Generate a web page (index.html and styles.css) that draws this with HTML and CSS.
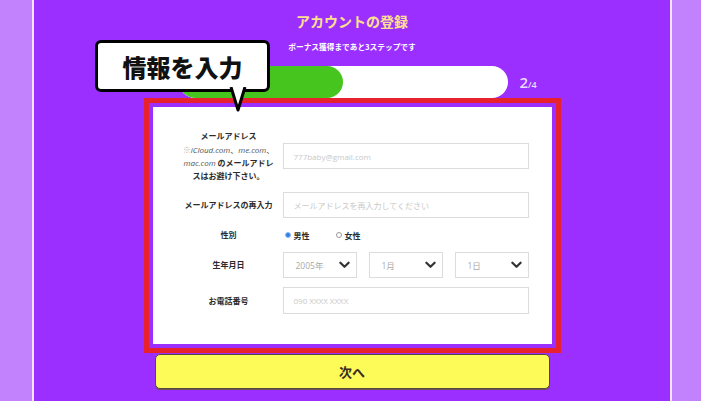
FILE: index.html
```html
<!DOCTYPE html>
<html lang="ja">
<head>
<meta charset="utf-8">
<title>アカウントの登録</title>
<link rel="stylesheet" href="styles.css">
</head>
<body>
<main class="page">
  <h1 class="title">アカウントの登録</h1>
  <p class="sub">ボーナス獲得まであと3ステップです</p>
  <div class="progress-row">
    <div class="bar"><div class="fill" style="width:50%"></div></div>
    <span class="count"><b>2</b><small>/4</small></span>
  </div>
  <form class="card">
    <div class="row row-tall">
      <div class="label">メールアドレス<br><span class="note"><span class="mark">※</span><i>iCloud.com</i>、<i>me.com</i>、</span><br><span class="note"><i>mac.com</i></span> のメールアドレ<br>スはお避け下さい。</div>
      <div class="field ph">777baby@gmail.com</div>
    </div>
    <div class="row">
      <div class="label">メールアドレスの再入力</div>
      <div class="field ph">メールアドレスを再入力してください</div>
    </div>
    <div class="row row-radio">
      <div class="label">性別</div>
      <div class="radios">
        <span class="radio"><span class="dot on"></span>男性</span>
        <span class="radio"><span class="dot"></span>女性</span>
      </div>
    </div>
    <div class="row">
      <div class="label">生年月日</div>
      <div class="selects">
        <div class="select"><span>2005年</span><svg viewBox="0 0 12 8" class="chev"><polyline points="1.5,1.5 6,6 10.5,1.5"/></svg></div>
        <div class="select"><span>1月</span><svg viewBox="0 0 12 8" class="chev"><polyline points="1.5,1.5 6,6 10.5,1.5"/></svg></div>
        <div class="select"><span>1日</span><svg viewBox="0 0 12 8" class="chev"><polyline points="1.5,1.5 6,6 10.5,1.5"/></svg></div>
      </div>
    </div>
    <div class="row row-phone">
      <div class="label">お電話番号</div>
      <div class="field ph">090 XXXX XXXX</div>
    </div>
  </form>
  <button class="next" type="button">次へ</button>
  <div class="callout">情報を入力<svg class="tail" viewBox="0 0 18 26"><polygon points="1,0 17,0 9,24" fill="#fff"/><polyline points="2,0 9,23 16,0" fill="none" stroke="#000" stroke-width="3" stroke-linejoin="round"/></svg></div>
</main>
</body>
</html>
```

FILE: styles.css
```css
* { box-sizing: border-box; }
html, body { margin: 0; padding: 0; }
body {
  width: 701px;
  height: 401px;
  overflow: hidden;
  background: #c281fd;
  font-family: "Noto Sans CJK JP", "Noto Sans", sans-serif;
}
.page {
  position: relative;
  margin-left: 32px;
  width: 640px;
  height: 401px;
  background: #9a2fff;
  border-left: 2px solid #f0e4ff;
  border-right: 2px solid #f0e4ff;
  display: flex;
  flex-direction: column;
  align-items: center;
  padding-top: 12px;
}
.title {
  margin: 0;
  font-size: 14px;
  line-height: 18px;
  font-weight: 700;
  color: #ffe08c;
}
.sub {
  margin: 11px 0 0;
  font-size: 7.7px;
  line-height: 12px;
  font-weight: 700;
  color: #fff;
}
.progress-row {
  margin-top: 13px;
  width: 399px;
  display: flex;
  align-items: center;
  padding-left: 26px;
  gap: 12px;
}
.bar {
  width: 329px;
  height: 32px;
  border-radius: 16px;
  background: #fff;
  overflow: hidden;
}
.fill {
  height: 100%;
  background: #46c51f;
  border-radius: 16px;
}
.count {
  color: #eadcff;
  font-family: "Open Sans", "Noto Sans", sans-serif;
  font-weight: 600;
  line-height: 1;
}
.count b { font-size: 15px; font-weight: 600; }
.count small { font-size: 9px; }
.card {
  margin-top: 9px;
  width: 399px;
  background: #fff;
  outline: 5px solid #e8212f;
  outline-offset: 4px;
  padding: 22px 23px 30px 26px;
  display: flex;
  flex-direction: column;
  gap: 9px;
}
.row {
  display: flex;
  align-items: center;
  height: 26px;
}
.row-tall { height: 54px; }
.row-radio { height: 16px; }
.row-phone { height: 27px; }
.label {
  width: 100px;
  margin-right: 4px;
  text-align: center;
  font-size: 8px;
  line-height: 13.4px;
  font-weight: 700;
  color: #2b2b2b;
  white-space: nowrap;
}
.note { font-weight: 400; color: #555; }
.note i { font-family: "Open Sans", "Noto Sans", sans-serif; }
.mark { color: #b9b9b9; }
.field {
  flex: 1;
  height: 26px;
  border: 1px solid #dcdcdc;
  display: flex;
  align-items: center;
  padding-left: 10px;
  font-size: 8px;
  color: #c9c9c9;
}
.row-phone .field { height: 27px; }
.field.ph { font-family: "Open Sans", "Noto Sans CJK JP", sans-serif; }
.radios {
  display: flex;
  align-items: center;
  gap: 26px;
  padding-left: 2px;
}
.radio {
  display: flex;
  align-items: center;
  gap: 3px;
  font-size: 8px;
  font-weight: 700;
  color: #2b2b2b;
}
.dot {
  width: 6px;
  height: 6px;
  border-radius: 50%;
  border: 1px solid #9a9a9a;
  background: #fff;
}
.dot.on {
  border-color: #8fb8ef;
  background: #2f7fe6;
}
.selects {
  flex: 1;
  height: 100%;
  display: grid;
  grid-template-columns: repeat(3, 1fr);
  gap: 12px;
}
.select {
  border: 1px solid #dcdcdc;
  display: flex;
  align-items: center;
  justify-content: space-between;
  padding: 0 6px 0 12px;
  font-size: 8.5px;
  color: #aaa;
  font-family: "Open Sans", "Noto Sans CJK JP", sans-serif;
}
.chev {
  width: 11px;
  height: 8px;
  fill: none;
  stroke: #333;
  stroke-width: 2.4;
  stroke-linecap: round;
  stroke-linejoin: round;
}
.next {
  margin-top: 10px;
  width: 395px;
  height: 35px;
  background: #fdfb58;
  border: 1px solid #5a4646;
  border-radius: 5px;
  box-shadow: 0 1px 0 #6a5050;
  font-family: "Noto Sans CJK JP", sans-serif;
  font-size: 13px;
  font-weight: 700;
  color: #3b2a24;
  padding: 0;
}
.callout {
  position: absolute;
  left: 61px;
  top: 40px;
  width: 175px;
  height: 52px;
  background: #fff;
  border: 3px solid #000;
  border-radius: 6px;
  display: flex;
  align-items: center;
  justify-content: center;
  font-size: 24px;
  font-weight: 900;
  color: #111;
  letter-spacing: 0;
}
.tail {
  position: absolute;
  left: 131px;
  top: 44px;
  width: 18px;
  height: 26px;
}
```
